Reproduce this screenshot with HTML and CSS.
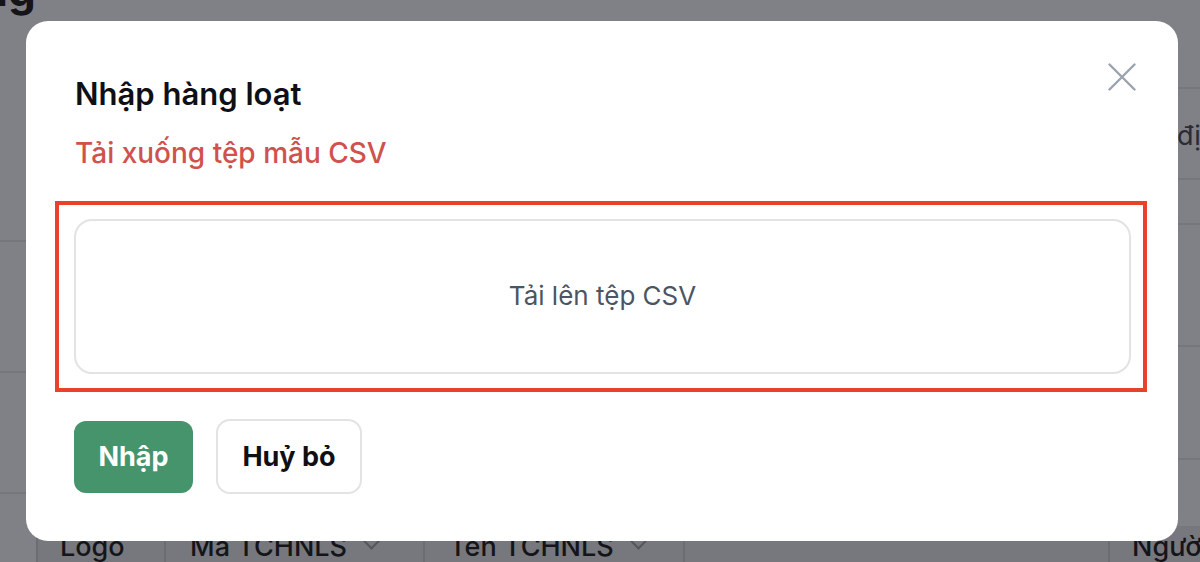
FILE: index.html
```html
<!DOCTYPE html>
<html lang="vi">
<head>
<meta charset="utf-8">
<title>Nhập hàng loạt</title>
<link rel="stylesheet" href="styles.css">
</head>
<body>
<div class="page">
  <div class="page-title">Thương hiệu đang</div>
  <div class="page-body">
    <div class="left-rows">
      <div class="lrow r1"></div>
      <div class="lrow r2"></div>
      <div class="lrow r3"></div>
    </div>
    <div class="right-rows">
      <div class="rrow q1"></div>
      <div class="rrow q2"><span class="rtext">Mã định danh</span></div>
      <div class="rrow q3"></div>
      <div class="rrow q4"></div>
      <div class="rrow q5"></div>
    </div>
  </div>
  <div class="thead">
    <div class="th th-logo">Logo</div>
    <div class="th th-ma">Mã TCHNLS <span class="chev"></span></div>
    <div class="th th-ten">Tên TCHNLS <span class="chev"></span></div>
    <div class="th th-spacer"></div>
    <div class="th th-nguoi">Người tạo</div>
  </div>
</div>

<div class="backdrop">
  <div class="modal">
    <button class="close" aria-label="Đóng">
      <svg width="28" height="28" viewBox="0 0 28 28" fill="none" stroke="#9ca3af" stroke-width="2.4" stroke-linecap="round">
        <path d="M1.5 1.5 L26.5 26.5 M26.5 1.5 L1.5 26.5"/>
      </svg>
    </button>
    <h2 class="title">Nhập hàng loạt</h2>
    <a class="template-link">Tải xuống tệp mẫu CSV</a>
    <div class="drop-wrap">
      <div class="dropzone">Tải lên tệp CSV</div>
      <div class="highlight"></div>
    </div>
    <div class="actions">
      <button class="btn btn-primary">Nhập</button>
      <button class="btn btn-outline">Huỷ bỏ</button>
    </div>
  </div>
</div>
</body>
</html>
```

FILE: styles.css
```css
* { box-sizing: border-box; }

html, body {
  margin: 0;
  height: 100%;
  overflow: hidden;
}

body {
  font-family: Inter, "Noto Sans", "Liberation Sans", sans-serif;
  background: #808186;
  color: #16161b;
}

/* ---------- background page (already dimmed) ---------- */
.page {
  height: 562px;
  display: flex;
  flex-direction: column;
}

.page-title {
  font-size: 44px;
  font-weight: 700;
  line-height: 1;
  margin-top: -32px;
  margin-left: -352px;
  height: 44px;
  color: #141419;
  white-space: nowrap;
}

.page-body {
  flex: 1;
  display: flex;
  justify-content: space-between;
  margin-top: -12px;
}

.left-rows {
  width: 30px;
  display: flex;
  flex-direction: column;
}
.lrow { border-bottom: 2px solid #76777c; }
.r1 { height: 242px; }
.r2 { height: 131px; }
.r3 { height: 121px; }

.right-rows {
  width: 40px;
  display: flex;
  flex-direction: column;
}
.rrow { border-bottom: 2px solid #76777c; position: relative; overflow: hidden; }
.q1 { height: 89px; }
.q2 { height: 91px; }
.q3 { height: 45px; }
.q4 { height: 122px; }
.q5 { height: 113px; }
.rtext {
  position: absolute;
  right: -104px;
  top: 30px;
  font-size: 27px;
  color: #2a2b33;
  white-space: nowrap;
}

.thead {
  height: 36px;
  display: flex;
  align-items: flex-end;
  background: #77787e;
  margin-left: 36px;
  margin-top: -4px;
}
.th {
  height: 100%;
  border-left: 2px solid #6c6d72;
  font-size: 27px;
  font-weight: 500;
  color: #141419;
  padding-top: 4px;
  white-space: nowrap;
  display: flex;
  align-items: flex-start;
  gap: 18px;
}
.th-logo { width: 128px; padding-left: 22px; }
.th-ma { width: 259px; padding-left: 24px; }
.th-ten { flex: 0 0 260px; padding-left: 24px; }
.th-spacer { flex: 1; }
.th-nguoi { width: 92px; padding-left: 22px; }
.chev {
  display: inline-block;
  width: 13px;
  height: 13px;
  border-right: 2px solid #55565c;
  border-bottom: 2px solid #55565c;
  transform: rotate(45deg);
  margin-top: 4px;
}

/* ---------- modal ---------- */
.backdrop {
  position: fixed;
  inset: 0;
  padding: 21px 22px 21px 26px;
}

.modal {
  position: relative;
  width: 1152px;
  height: 520px;
  background: #ffffff;
  border-radius: 22px;
  padding: 54px 47px 0 48px;
  display: flex;
  flex-direction: column;
}

.close {
  position: absolute;
  top: 42px;
  right: 42px;
  width: 28px;
  height: 28px;
  padding: 0;
  border: 0;
  background: none;
  display: flex;
}

.title {
  margin: 0;
  padding-left: 1px;
  font-size: 31px;
  line-height: 38px;
  font-weight: 600;
  color: #0f1016;
}

.template-link {
  margin-top: 23px;
  padding-left: 1px;
  font-size: 28px;
  line-height: 34px;
  font-weight: 500;
  color: #cf524d;
}

.drop-wrap {
  position: relative;
  margin-top: 49px;
}

.dropzone {
  height: 155px;
  border: 2px solid #e3e3e5;
  border-radius: 18px;
  display: flex;
  align-items: center;
  justify-content: center;
  font-size: 26px;
  color: #4b5563;
  padding-bottom: 2px;
}

.highlight {
  position: absolute;
  top: -18px;
  left: -19px;
  right: -16px;
  bottom: -18px;
  border: 4px solid #e8432a;
  pointer-events: none;
}

.actions {
  margin-top: 45px;
  display: flex;
  align-items: center;
  gap: 23px;
}

.btn {
  font-family: inherit;
  font-size: 27px;
  font-weight: 700;
  border-radius: 12px;
  cursor: pointer;
}

.btn-primary {
  width: 119px;
  height: 72px;
  border: 0;
  background: #45946c;
  color: #ffffff;
}

.btn-outline {
  width: 146px;
  height: 75px;
  border: 2px solid #e3e3e5;
  border-radius: 14px;
  background: #ffffff;
  color: #0f1016;
}
```
